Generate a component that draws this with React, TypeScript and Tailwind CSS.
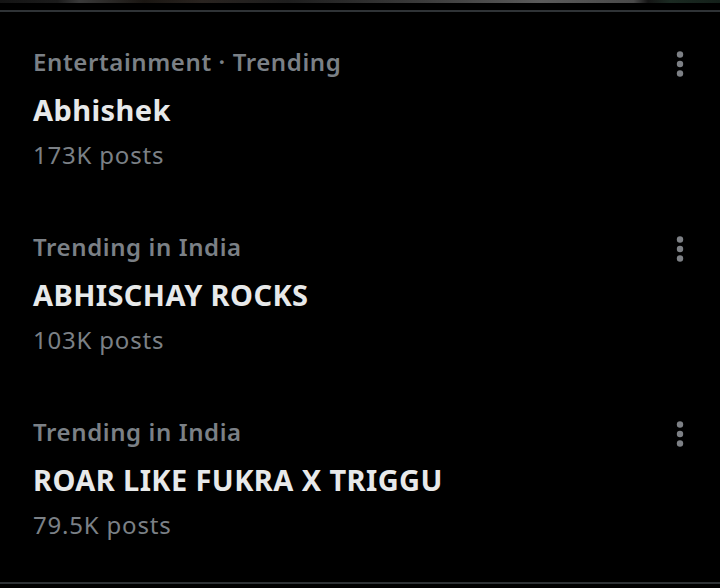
const trends = [
  { category: 'Entertainment · Trending', title: 'Abhishek', posts: '173K posts' },
  { category: 'Trending in India', title: 'ABHISCHAY ROCKS', posts: '103K posts' },
  { category: 'Trending in India', title: 'ROAR LIKE FUKRA X TRIGGU', posts: '79.5K posts' },
]

function MoreIcon() {
  return (
    <svg width="10" height="28" viewBox="0 0 10 28" className="text-[#7d8085]" fill="currentColor">
      <circle cx="5" cy="4.5" r="3.2" />
      <circle cx="5" cy="14" r="3.2" />
      <circle cx="5" cy="23.5" r="3.2" />
    </svg>
  )
}

function TrendRow({ category, title, posts }: { category: string; title: string; posts: string }) {
  return (
    <div className="flex items-start justify-between pl-[33px] pr-[35px] pt-[34px] pb-[26px]">
      <div className="flex flex-col">
        <div className="h-[32px] text-[24px] leading-[32px] font-semibold tracking-[0.6px] text-[#7b8086]">{category}</div>
        <div className="mt-[14px] h-[36px] text-[29px] leading-[36px] font-bold tracking-[0.4px] text-[#e7e9ea]">{title}</div>
        <div className="mt-[11px] h-[32px] text-[24px] leading-[32px] tracking-[0.8px] text-[#7b8086]">{posts}</div>
      </div>
      <div className="pt-[4px]">
        <MoreIcon />
      </div>
    </div>
  )
}

export default function App() {
  return (
    <div className="h-[588px] w-[720px] overflow-hidden bg-black font-['Noto_Sans','Open_Sans',sans-serif]">
      <div className="h-[3px] w-full bg-[linear-gradient(90deg,#141414_0%,#1c1c1c_8%,#3a3a3a_11%,#1a1612_20%,#2a2420_28%,#1e1e1e_40%,#3a3a3a_58%,#5a5a5a_75%,#4a4a4a_88%,#151515_90%,#1b2a22_93%,#14201a_100%)]" />
      <div className="h-[7px]" />
      <div className="h-[2px] bg-[#2f3336]" />
      {trends.map((t) => (
        <TrendRow key={t.title} {...t} />
      ))}
      <div className="h-[15px]" />
      <div className="h-[2px] bg-[#2f3336]" />
    </div>
  )
}
